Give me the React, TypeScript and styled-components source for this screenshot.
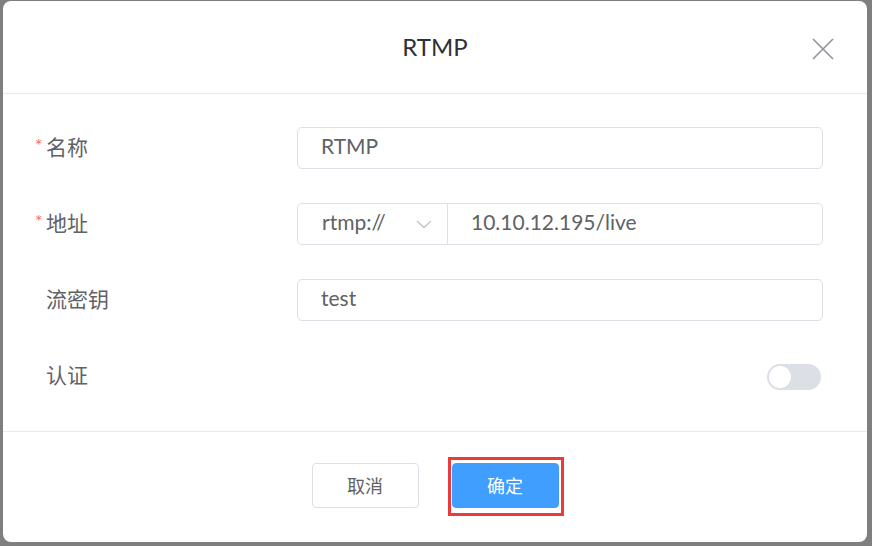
import React from "react";
import styled, { createGlobalStyle } from "styled-components";

const Global = createGlobalStyle`
  html, body { margin: 0; padding: 0; }
  body {
    background: #7f7f7f;
    font-family: Lato, "Noto Sans CJK SC", sans-serif;
  }
`;

const Screen = styled.div`
  width: 872px;
  height: 546px;
  overflow: hidden;
  position: relative;
  background: #7f7f7f;
`;

const Dialog = styled.div`
  position: absolute;
  left: 3px;
  top: 1px;
  width: 864px;
  height: 541px;
  background: #fff;
  border-radius: 8px;
  display: flex;
  flex-direction: column;
  overflow: hidden;
`;

const Header = styled.div`
  height: 92px;
  border-bottom: 1px solid #e8eaf0;
  display: grid;
  grid-template-columns: 1fr auto 1fr;
  align-items: center;
  flex-shrink: 0;
`;

const Title = styled.div`
  grid-column: 2;
  font-size: 24px;
  color: #303133;
  padding-bottom: 1px;
`;

const CloseBtn = styled.button`
  grid-column: 3;
  justify-self: end;
  margin-right: 32px;
  margin-top: 3px;
  width: 24px;
  height: 24px;
  padding: 0;
  border: none;
  background: none;
  display: flex;
  align-items: center;
  justify-content: center;
  cursor: pointer;
`;

const Body = styled.div`
  padding: 33px 44px 34px 32px;
  display: flex;
  flex-direction: column;
  gap: 34px;
  border-bottom: 1px solid #e8eaf0;
`;

const Row = styled.div`
  height: 42px;
  display: flex;
  align-items: center;
`;

const Label = styled.div`
  width: 262px;
  flex-shrink: 0;
  display: flex;
  align-items: center;
  font-size: 21px;
  color: #606266;
  padding-bottom: 5px;
`;

const Star = styled.span`
  width: 11px;
  color: #f56c6c;
  font-size: 18px;
  padding-bottom: 2px;
`;

const Field = styled.div`
  flex: 1;
  height: 42px;
  box-sizing: border-box;
  border: 1px solid #dcdfe6;
  border-radius: 5px;
  display: flex;
  align-items: center;
  font-size: 21px;
  color: #606266;
`;

const Value = styled.div`
  padding-left: 23px;
  padding-bottom: 5px;
  flex: 1;
`;

const Select = styled.div`
  width: 150px;
  height: 100%;
  box-sizing: border-box;
  border-right: 1px solid #dcdfe6;
  display: flex;
  align-items: center;
  justify-content: space-between;
  padding: 0 15px 0 24px;
`;

const SelectText = styled.span`
  padding-bottom: 5px;
`;

const SwitchCell = styled.div`
  flex: 1;
  display: flex;
  justify-content: flex-end;
  padding-right: 2px;
  padding-top: 2px;
`;

const Track = styled.div`
  width: 54px;
  height: 26px;
  border-radius: 13px;
  background: #dcdfe6;
  display: flex;
  align-items: center;
  padding: 0 2px;
  box-sizing: border-box;
`;

const Knob = styled.div`
  width: 22px;
  height: 22px;
  border-radius: 50%;
  background: #fff;
`;

const Footer = styled.div`
  flex: 1;
  display: flex;
  justify-content: center;
  align-items: flex-start;
  padding-top: 31px;
  gap: 33px;
`;

const Button = styled.button<{ $primary?: boolean }>`
  width: 107px;
  height: 45px;
  box-sizing: border-box;
  border-radius: 4px;
  font-family: Lato, "Noto Sans CJK SC", sans-serif;
  font-size: 18px;
  padding: 0 0 2px;
  cursor: pointer;
  border: 1px solid ${(p) => (p.$primary ? "#409eff" : "#dcdfe6")};
  background: ${(p) => (p.$primary ? "#409eff" : "#fff")};
  color: ${(p) => (p.$primary ? "#fff" : "#606266")};
`;

const Highlight = styled.div`
  position: relative;
  &::after {
    content: "";
    position: absolute;
    left: -4px;
    top: -6px;
    right: -5px;
    bottom: -8px;
    border: 3px solid #ec3a3a;
    pointer-events: none;
  }
`;

export default function App() {
  return (
    <>
      <Global />
      <Screen>
        <Dialog>
          <Header>
            <Title>RTMP</Title>
            <CloseBtn aria-label="close">
              <svg width="22" height="22" viewBox="0 0 22 22">
                <path d="M1 1 L21 21 M21 1 L1 21" stroke="#909399" strokeWidth="1.6" fill="none" />
              </svg>
            </CloseBtn>
          </Header>
          <Body>
            <Row>
              <Label>
                <Star>*</Star>名称
              </Label>
              <Field>
                <Value>RTMP</Value>
              </Field>
            </Row>
            <Row>
              <Label>
                <Star>*</Star>地址
              </Label>
              <Field>
                <Select>
                  <SelectText>rtmp://</SelectText>
                  <svg width="16" height="10" viewBox="0 0 16 10">
                    <path d="M1 2 L8 8.5 L15 2" stroke="#c0c4cc" strokeWidth="1.3" fill="none" />
                  </svg>
                </Select>
                <Value>10.10.12.195/live</Value>
              </Field>
            </Row>
            <Row>
              <Label>
                <Star />流密钥
              </Label>
              <Field>
                <Value>test</Value>
              </Field>
            </Row>
            <Row>
              <Label>
                <Star />认证
              </Label>
              <SwitchCell>
                <Track>
                  <Knob />
                </Track>
              </SwitchCell>
            </Row>
          </Body>
          <Footer>
            <Button>取消</Button>
            <Highlight>
              <Button $primary>确定</Button>
            </Highlight>
          </Footer>
        </Dialog>
      </Screen>
    </>
  );
}
